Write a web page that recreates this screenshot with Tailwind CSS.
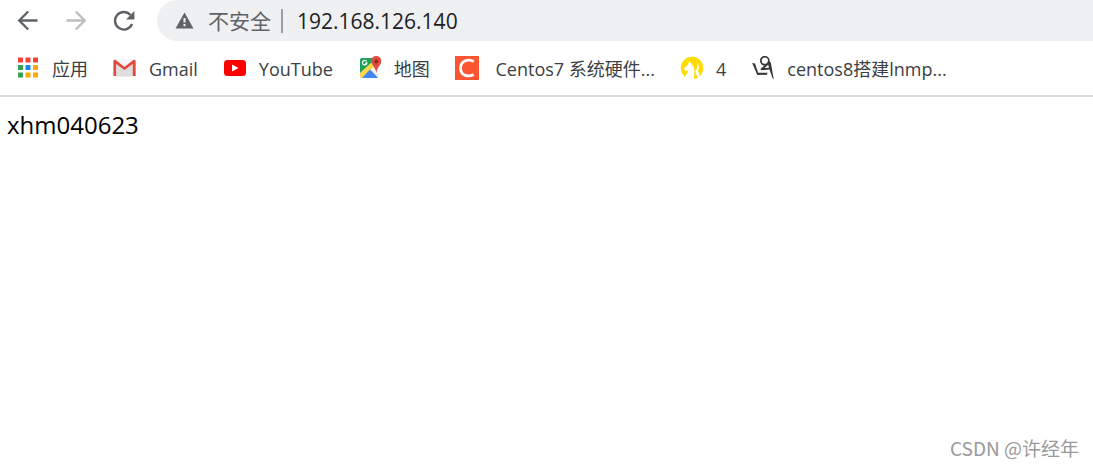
<!DOCTYPE html>
<html lang="zh-CN">
<head>
    <meta charset="UTF-8">
    <meta name="viewport" content="width=device-width, initial-scale=1.0">
    <title>192.168.126.140</title>
    <script src="https://cdn.jsdelivr.net/npm/@tailwindcss/browser@4"></script>
</head>
<body class="min-h-screen flex flex-col overflow-hidden bg-white font-['Open_Sans','Noto_Sans_CJK_SC',sans-serif]">
    <header class="border-b-2 border-[#dadada]">
        <!-- Toolbar -->
        <div class="flex items-center h-[41px] pl-4">
            <button class="w-6 h-6 mr-6 shrink-0" aria-label="后退">
                <svg viewBox="0 0 24 24" class="w-6 h-6" fill="none" stroke="#5f6368" stroke-width="2.4"><path d="M21.5 11.500H3.5M12.2 2.500L3.2 11.500L12.2 20.500"/></svg>
            </button>
            <button class="w-6 h-6 mr-6 shrink-0" aria-label="前进">
                <svg viewBox="0 0 24 24" class="w-6 h-6" fill="none" stroke="#bdbec0" stroke-width="2.4"><path d="M2.5 11.500H20.5M11.8 2.500L20.8 11.500L11.8 20.500"/></svg>
            </button>
            <button class="w-6 h-6 mr-[21px] shrink-0" aria-label="刷新">
                <svg viewBox="0 0 24 24" class="w-6 h-6" fill="none">
                    <path d="M20 15A8.8 8.8 0 1 1 18.4 5.9" stroke="#5f6368" stroke-width="2.4"/>
                    <path d="M22.4 2V10.400H14Z" fill="#5f6368"/>
                </svg>
            </button>
            <div class="flex flex-1 items-center h-full min-w-0 pl-[18px] bg-[#eff0f2] rounded-l-full">
                <svg viewBox="0 0 20 18" class="w-5 h-[18px] mr-[13px] shrink-0">
                    <path d="M9.500 .5L18.500 16.500H.5Z" fill="#5f6368"/>
                    <path d="M8.500 6h2v4.500h-2zM8.500 12h2v2.200h-2z" fill="#eff0f2"/>
                </svg>
                <span class="text-[21px] leading-6 text-[#5f6368] whitespace-nowrap">不安全</span>
                <span class="w-0.5 h-6 ml-[10px] mr-[14px] bg-[#9b9da0] shrink-0"></span>
                <input type="text" value="192.168.126.140" aria-label="地址" class="flex-1 min-w-0 h-8 text-[21px] text-[#202124] bg-transparent outline-none">
            </div>
        </div>

        <!-- Bookmarks -->
        <nav class="flex items-center gap-[25px] h-[54px] pl-4 text-lg leading-6 text-[#3c4043] whitespace-nowrap">
            <a href="#" class="flex items-center gap-3">
                <svg viewBox="0 0 24 24" class="w-6 h-6">
                    <path d="M2 1.500h5v5H2zM9.500 1.500h5v5h-5zM17 1.500h5v5h-5z" fill="#f44336"/>
                    <path d="M2 9h5v5H2zM2 16.500h5v5H2z" fill="#34a057"/>
                    <path d="M9.500 9h5v5h-5z" fill="#1a86f0"/>
                    <path d="M17 9h5v5h-5zM9.500 16.500h5v5h-5zM17 16.500h5v5h-5z" fill="#fbab00"/>
                </svg>
                <span class="pt-0.5">应用</span>
            </a>
            <a href="#" class="flex items-center gap-3">
                <svg viewBox="0 0 24 24" class="w-6 h-6">
                    <path d="M1 3h22v17.500H1z" fill="#eeeeee"/>
                    <path d="M4 20.500V8l8 6 8-6v12.500z" fill="#dedede"/>
                    <path d="M2 5l10 8 10-8V3H2z" fill="#f6f6f6"/>
                    <path d="M1.800 20V5.200L11.500 12.500l9.700-7.300V20" fill="none" stroke="#e04a3f" stroke-width="2.800" stroke-linejoin="round"/>
                </svg>
                <span class="pt-0.5">Gmail</span>
            </a>
            <a href="#" class="flex items-center gap-3">
                <svg viewBox="0 0 24 24" class="w-6 h-6">
                    <rect x="1" y="4" width="22" height="16" rx="3.500" fill="#ff0000"/>
                    <path d="M9 8.500L15.500 12L9 15.500Z" fill="#ffffff"/>
                </svg>
                <span class="pt-0.5">YouTube</span>
            </a>
            <a href="#" class="flex items-center gap-3">
                <svg viewBox="0 0 24 24" class="w-6 h-6">
                    <path d="M4 2h16v18q0 2-2 2H4q-2 0-2-2V4q0-2 2-2z" fill="#e3e5e8"/>
                    <path d="M4 2h12l1 6L2 20V4q0-2 2-2z" fill="#1fa15d"/>
                    <path d="M2 17L14 6l3 3.500L5 22H4q-2 0-2-2z" fill="#ffd84a"/>
                    <path d="M4 22l8-8.500 8 8.500z" fill="#4285f4"/>
                    <path d="M13 13.500L16 10.500l5 6v4.500z" fill="#f1f2f4"/>
                    <path d="M8.700 5.400A2.300 2.300 0 1 0 9 7.200H7" fill="none" stroke="#ffffff" stroke-width="1.200"/>
                    <path d="M18.300 0a5 5 0 0 0-5 5c0 4.500 4.200 5.500 5 12 .8-6.500 5-7.500 5-12a5 5 0 0 0-5-5z" fill="#e14a3e"/>
                    <circle cx="18.300" cy="5.500" r="1.900" fill="#8c2b26"/>
                </svg>
                <span class="pt-0.5">地图</span>
            </a>
            <a href="#" class="flex items-center gap-3">
                <svg viewBox="0 0 24 24" class="w-6 h-6">
                    <path d="M0 0h24v24H0z" fill="#fc5531"/>
                    <path d="M18.800 5.500C14 2.600 5.600 4 5.600 12.200c0 8 8.400 9 13 6.300" fill="none" stroke="#ffffff" stroke-width="2.700"/>
                </svg>
                <span class="pt-0.5">&nbsp;Centos7 系统硬件...</span>
            </a>
            <a href="#" class="flex items-center gap-3">
                <svg viewBox="0 0 24 24" class="w-6 h-6">
                    <circle cx="12" cy="12" r="11.200" fill="#ffdc00"/>
                    <path d="M5 24L5.500 20L8.500 14.500L5 15L4 12.500L8 8.500L9.500 5L11.500 8Q14 10 14.300 14L14 24Z" fill="#ffffff"/>
                    <path d="M17 24L18 21Q14.800 17.500 15.500 14.500Q17.800 12 18 7.500Q20 12 17.800 14.500Q19.800 17.500 19.500 22L18.500 24Z" fill="#ffffff"/>
                </svg>
                <span class="pt-0.5">4</span>
            </a>
            <a href="#" class="flex items-center gap-3">
                <svg viewBox="0 0 24 24" class="w-6 h-6" fill="none" stroke="#3b3636">
                    <circle cx="13.800" cy="4.700" r="4" stroke-width="1.700"/>
                    <path d="M1.200 7L4 7.500L7.200 16.800L16.500 16.800L16 18.800L6.300 19Z" fill="#3b3636" stroke="none"/>
                    <path d="M18.500 5.500L19.800 6.500L22.800 23.500L21.500 22L18.500 13.500L10 14.300L9.500 12.800ZM17.200 8.800L13.500 12L18 11.800Z" fill="#3b3636" fill-rule="evenodd" stroke="none"/>
                </svg>
                <span class="pt-0.5">centos8搭建lnmp...</span>
            </a>
        </nav>
    </header>

    <!-- Page content -->
    <main class="flex-1 px-[7px] pt-3 text-2xl text-black">xhm040623</main>

    <footer class="pr-[14px] pb-1 text-right text-[19px] leading-7 text-[#999999] font-['Noto_Sans_CJK_SC',sans-serif]">CSDN @许经年</footer>
</body>
</html>
